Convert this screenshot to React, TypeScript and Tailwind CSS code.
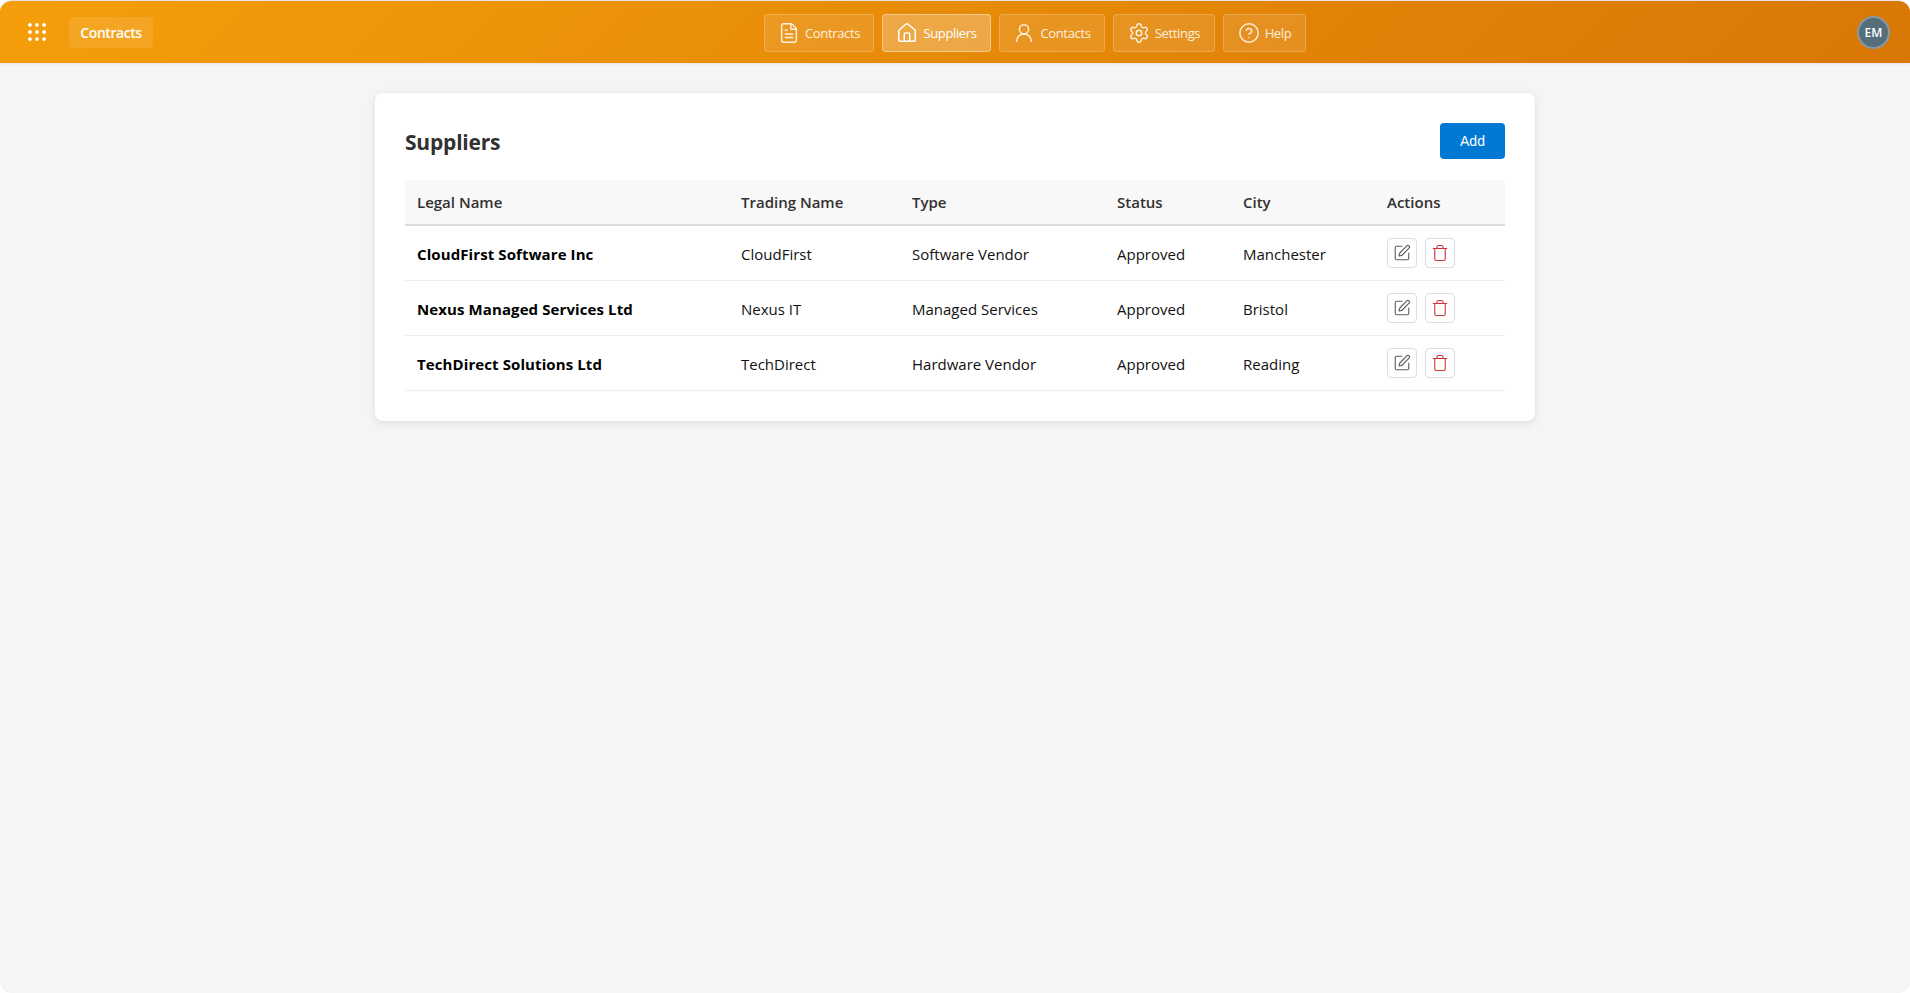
import React from "react";
import { FileText, House, UserRound, Settings, CircleHelp, SquarePen, Trash } from "lucide-react";

const nav = [
  { label: "Contracts", Icon: FileText, w: "w-[110px]" },
  { label: "Suppliers", Icon: House, w: "w-[109px]", active: true },
  { label: "Contacts", Icon: UserRound, w: "w-[106px]" },
  { label: "Settings", Icon: Settings, w: "w-[102px]" },
  { label: "Help", Icon: CircleHelp, w: "w-[83px]" },
];

const rows = [
  ["CloudFirst Software Inc", "CloudFirst", "Software Vendor", "Approved", "Manchester"],
  ["Nexus Managed Services Ltd", "Nexus IT", "Managed Services", "Approved", "Bristol"],
  ["TechDirect Solutions Ltd", "TechDirect", "Hardware Vendor", "Approved", "Reading"],
];

const heads = ["Legal Name", "Trading Name", "Type", "Status", "City", "Actions"];

export default function App() {
  return (
    <div className="h-[993px] w-[1910px] overflow-hidden bg-white font-['Open_Sans','Noto_Sans',sans-serif]">
      <div className="flex h-full flex-col overflow-hidden rounded-[12px] border-t border-[#e5e5e5] bg-[#f5f5f5]">
        <header className="relative flex h-[62px] shrink-0 items-center justify-between bg-[linear-gradient(135deg,#f59e0b,#d97706)] pl-[28px] pr-[20px] text-white shadow-[0_1px_3px_rgba(0,0,0,0.08)]">
          <div className="flex items-center">
            <svg width="18" height="18" viewBox="0 0 18 18" fill="white">
              {[1.9, 9, 16.1].map((y) =>
                [1.9, 9, 16.1].map((x) => <circle key={`${x}-${y}`} cx={x} cy={y} r="1.9" />)
              )}
            </svg>
            <div className="ml-[23px] flex h-[31px] w-[84px] items-center justify-center rounded-[4px] bg-white/10 text-[14px] font-semibold tracking-[-0.45px]">
              Contracts
            </div>
          </div>
          <nav className="absolute left-[764px] top-[13px] flex gap-[8px]">
            {nav.map(({ label, Icon, w, active }) => (
              <div
                key={label}
                className={`flex h-[38px] ${w} items-center justify-center gap-[5px] rounded-[4px] border text-[13px] tracking-[-0.35px] ${
                  active
                    ? "border-white/40 bg-white/25 text-white"
                    : "border-white/20 bg-white/10 text-white/85"
                }`}
              >
                <Icon size={22} strokeWidth={1.6} />
                <span className="pt-[1px]">{label}</span>
              </div>
            ))}
          </nav>
          <div className="flex h-[33px] w-[33px] items-center justify-center rounded-full border-2 border-white/30 bg-[#546e7a] pt-[1px] text-[12px] font-semibold">
            EM
          </div>
        </header>
        <main className="flex justify-center pt-[30px]">
          <section className="w-[1160px] rounded-[8px] bg-white p-[30px] shadow-[0_2px_8px_rgba(0,0,0,0.1)]">
            <div className="mb-[21px] flex h-[36px] items-center justify-between">
              <h1 className="pt-[2px] text-[21px] font-bold leading-none tracking-[-0.2px] text-[#323130]">Suppliers</h1>
              <button className="h-[36px] w-[65px] rounded-[4px] bg-[#0078d4] font-['Liberation_Sans',sans-serif] text-[14px] text-white">
                Add
              </button>
            </div>
            <table className="w-[1100px] table-fixed border-collapse text-[15px]">
              <colgroup>
                <col className="w-[324px]" />
                <col className="w-[171px]" />
                <col className="w-[205px]" />
                <col className="w-[126px]" />
                <col className="w-[144px]" />
                <col className="w-[130px]" />
              </colgroup>
              <thead>
                <tr className="h-[45px] border-b-2 border-[#dcdcdc] bg-[#f8f8f8]">
                  {heads.map((h) => (
                    <th key={h} className="px-[12px] text-left font-semibold text-[#323130]">
                      {h}
                    </th>
                  ))}
                </tr>
              </thead>
              <tbody>
                {rows.map((r) => (
                  <tr key={r[0]} className="h-[55px] border-b border-[#eeeeee] text-[#111111]">
                    {r.map((c, i) => (
                      <td key={c + i} className={`px-[12px] pt-[3px] ${i === 0 ? "font-bold tracking-[0.1px] text-black" : ""}`}>
                        {c}
                      </td>
                    ))}
                    <td className="px-[12px]">
                      <div className="flex gap-[8px]">
                        <button className="flex h-[30px] w-[30px] items-center justify-center rounded-[4px] border border-[#dddddd] bg-white text-[#605e5c]">
                          <SquarePen size={18} strokeWidth={1.5} />
                        </button>
                        <button className="flex h-[30px] w-[30px] items-center justify-center rounded-[4px] border border-[#dddddd] bg-white text-[#d13438]">
                          <Trash size={18} strokeWidth={1.5} />
                        </button>
                      </div>
                    </td>
                  </tr>
                ))}
              </tbody>
            </table>
          </section>
        </main>
      </div>
    </div>
  );
}
